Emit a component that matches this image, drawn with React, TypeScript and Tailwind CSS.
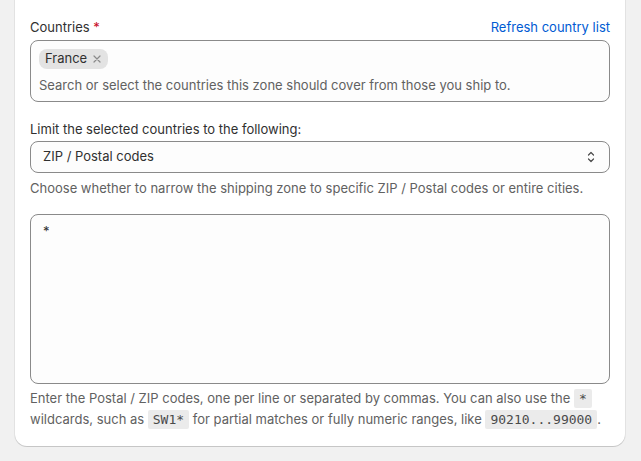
import React from "react";

const codeCls = "bg-[#ebebeb] px-[5px] py-[2px] rounded-[2px] text-[13px] text-[#4a4a4a]";
const mono = { fontFamily: "'DejaVu Sans Mono', monospace" };

export default function App() {
  return (
    <div className="w-[641px] h-[461px] bg-[#f1f1f1] overflow-hidden" style={{ fontFamily: "Inter, 'Noto Sans', sans-serif" }}>
      <div className="mx-[15px] -mt-[12px] w-[610px] bg-white rounded-[12px] shadow-[0_1px_0_0_rgba(0,0,0,0.12),0_0_0_1px_rgba(0,0,0,0.06)] px-[15px] pt-[30px] pb-[16px] text-[13px] text-[#303030]">
        <div className="flex justify-between items-center h-[20px]">
          <div>
            Countries <span className="text-[#c70a24]">*</span>
          </div>
          <div className="text-[#005bd3]">Refresh country list</div>
        </div>
        <div className="mt-[2px] h-[62px] border border-[#8a8a8a] rounded-[8px] bg-[#fdfdfd] px-[8px] pt-[8px]">
          <div className="inline-flex items-center h-[20px] rounded-[8px] bg-[#e3e3e3] pl-[6px] pr-[6px] gap-[5px]">
            <span>France</span>
            <svg width="10" height="10" viewBox="0 0 10 10" className="text-[#8a8a8a]">
              <path d="M2 2 L8 8 M8 2 L2 8" stroke="currentColor" strokeWidth="1.2" strokeLinecap="round" />
            </svg>
          </div>
          <div className="mt-[6px] text-[#616161] leading-[20px]">
            Search or select the countries this zone should cover from those you ship to.
          </div>
        </div>

        <div className="mt-[17px] leading-[20px]">Limit the selected countries to the following:</div>
        <div className="mt-[2px] h-[32px] border border-[#8a8a8a] rounded-[8px] bg-[#fdfdfd] flex items-center justify-between pl-[12px] pr-[12px]">
          <span>ZIP / Postal codes</span>
          <svg width="12" height="16" viewBox="0 0 12 16" className="text-[#4a4a4a]">
            <path d="M3.5 6 L6 3.5 L8.5 6 M3.5 10 L6 12.5 L8.5 10" stroke="currentColor" strokeWidth="1.2" fill="none" strokeLinecap="round" strokeLinejoin="round" />
          </svg>
        </div>
        <div className="mt-[5px] text-[#616161] leading-[20px]">
          Choose whether to narrow the shipping zone to specific ZIP / Postal codes or entire cities.
        </div>

        <div className="mt-[16px] h-[170px] border border-[#8a8a8a] rounded-[8px] bg-[#fdfdfd] px-[12px] pt-[6px] leading-[20px]">
          *
        </div>
        <div className="mt-[4px] text-[#616161] leading-[21px]">
          Enter the Postal / ZIP codes, one per line or separated by commas. You can also use the{" "}
          <code className={codeCls} style={mono}>*</code>{" "}
          wildcards, such as{" "}
          <code className={codeCls} style={mono}>SW1*</code>{" "}
          for partial matches or fully numeric ranges, like{" "}
          <code className={codeCls} style={mono}>90210...99000</code>
          .
        </div>
      </div>
    </div>
  );
}
